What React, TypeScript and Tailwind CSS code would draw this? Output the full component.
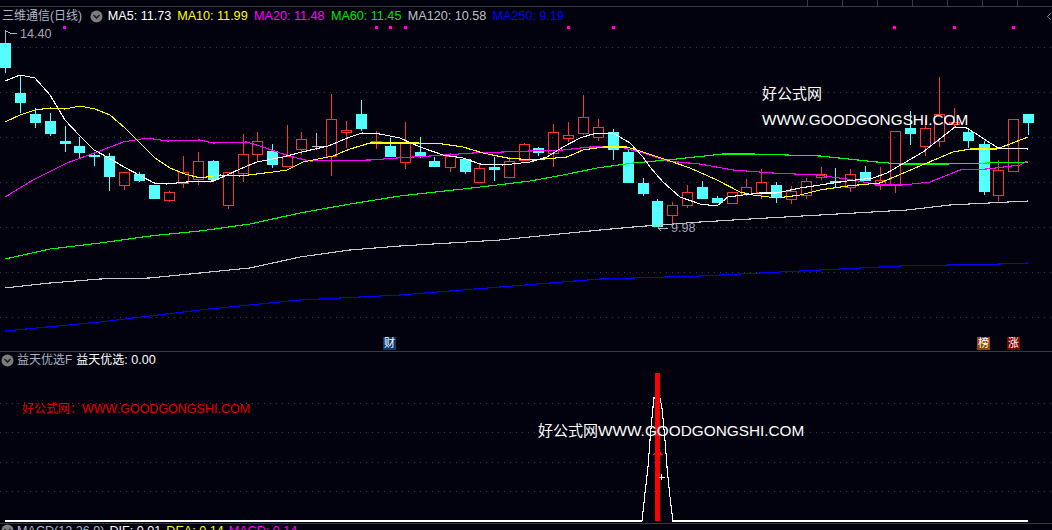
const FONT = "font-['Liberation_Sans','Noto_Sans_CJK_SC',sans-serif]";

// [x, bodyTop, bodyBottom, wickTop, wickBottom, kind]
type Candle = [number, number, number, number, number, "c" | "r" | "g"];

const candles: Candle[] = [
  [5, 43, 68, 32, 73, "c"],
  [20.5, 93, 103, 75, 113, "c"],
  [35.5, 114, 123, 108, 128, "c"],
  [50.5, 121, 134, 113, 136, "c"],
  [65, 141, 144, 126, 152, "c"],
  [79.5, 146, 153, 137, 159, "c"],
  [94.5, 155, 157, 153, 166, "c"],
  [109.5, 156, 177, 153, 191, "c"],
  [124.5, 172, 185, 172, 190, "r"],
  [139.5, 174, 181, 172, 182, "c"],
  [154, 185, 199, 185, 199, "c"],
  [169, 192, 200, 191, 202, "r"],
  [183.5, 172, 183, 156, 188, "r"],
  [198.5, 161, 179, 152, 185, "r"],
  [213.5, 161, 180, 160, 182, "c"],
  [228, 172, 205, 172, 209, "r"],
  [243, 154, 173, 134, 182, "r"],
  [257.5, 141, 154, 132, 162, "r"],
  [272.5, 151, 165, 144, 168, "c"],
  [287.5, 156, 166, 125, 167, "r"],
  [301.5, 139, 149, 132, 155, "r"],
  [316, 146, 146, 133, 150, "g"],
  [331, 119, 156, 94, 176, "r"],
  [346.5, 130, 132, 121, 148, "r"],
  [361.5, 114, 129, 100, 131, "c"],
  [376, 141, 143, 131, 149, "r"],
  [390.5, 146, 157, 138, 157, "c"],
  [405.5, 142, 162, 122, 169, "r"],
  [420, 152, 156, 137, 158, "c"],
  [434.5, 161, 167, 157, 167, "c"],
  [450.5, 156, 167, 153, 172, "r"],
  [465, 159, 172, 158, 174, "c"],
  [479.5, 168, 182, 164, 182, "r"],
  [494.5, 167, 170, 157, 181, "c"],
  [509, 161, 177, 157, 177, "r"],
  [524, 144, 160, 143, 161, "r"],
  [538.5, 148, 153, 147, 156, "c"],
  [553.5, 132, 153, 124, 167, "r"],
  [568.5, 135, 138, 122, 142, "r"],
  [583.5, 117, 133, 95, 135, "r"],
  [598.5, 127, 137, 119, 141, "r"],
  [613, 132, 150, 129, 160, "c"],
  [628, 152, 183, 150, 183, "c"],
  [643, 183, 194, 178, 196, "c"],
  [657.5, 201, 227, 199, 227, "c"],
  [672.5, 205, 215, 202, 227, "r"],
  [687.5, 192, 205, 185, 208, "r"],
  [702.5, 187, 199, 181, 199, "c"],
  [717.5, 198, 203, 196, 203, "c"],
  [732, 192, 203, 192, 203, "r"],
  [746.5, 187, 194, 179, 196, "r"],
  [761.5, 182, 192, 169, 199, "r"],
  [776.5, 185, 197, 182, 203, "c"],
  [791.5, 191, 199, 186, 204, "r"],
  [806.5, 181, 195, 178, 199, "r"],
  [821, 174, 177, 167, 180, "r"],
  [835, 181, 183, 168, 187, "c"],
  [850, 174, 187, 169, 192, "r"],
  [865, 172, 181, 166, 181, "c"],
  [880, 180, 185, 167, 190, "r"],
  [895, 131, 185, 131, 193, "r"],
  [910, 128, 134, 111, 145, "c"],
  [925, 128, 146, 119, 156, "r"],
  [939.5, 114, 141, 77, 147, "r"],
  [954.5, 122, 124, 108, 128, "r"],
  [968.5, 132, 141, 130, 148, "c"],
  [984, 144, 192, 141, 195, "c"],
  [998, 170, 195, 160, 201, "r"],
  [1013, 119, 171, 119, 172, "r"],
  [1028, 114, 123, 114, 135, "c"],
];

const ma5 = "5,81 20,75 35,78 50,95 65,120 79,135 94,150 109,158 124,167 139,175 154,183 167,184 187,182 213,181 227,175 240,169 257,162 283,157 302,152 328,146 350,137 362,133 380,134 400,138 420,147 443,155 463,158 480,164 503,165 530,162 547,157 563,147 580,138 593,134 613,133 630,143 643,157 650,167 663,182 680,197 700,204 717,206 728,197 743,195 760,193 777,193 800,188 820,185 847,181 873,178 887,173 923,152 955,127 967,128 998,148 1028,149";
const ma10 = "5,122 20,115 35,110 50,108 65,109 80,106 95,109 110,115 125,128 140,143 155,158 170,168 185,174 200,178 220,175 240,176 273,172 287,170 303,162 333,156 350,149 370,143 417,143 443,144 463,147 483,153 507,158 533,160 567,157 583,150 603,147 627,147 643,152 667,160 690,168 717,180 740,192 753,195 777,198 800,195 820,190 847,186 880,183 927,163 953,152 970,149 997,149 1028,137";
const ma20 = "5,197 33,180 67,163 100,151 123,142 147,138 167,141 200,140 213,143 247,142 263,147 280,153 297,158 310,161 370,160 397,158 430,156 473,153 503,152 530,151 563,150 590,147 620,147 643,153 667,161 700,164 733,170 773,173 817,175 847,179 880,185 903,185 930,182 960,170 987,169 1020,165 1028,161";
const ma60 = "5,259 50,249 100,243 150,236 200,231 250,224 300,213 350,204 400,196 463,189 497,185 530,181 563,175 597,168 633,163 667,160 723,154 753,154 820,156 877,162 900,164 947,164 1028,162";
const ma120 = "5,288 50,283 100,279 150,278 200,273 250,268 300,257 350,250 400,246 500,240 600,230 633,227 700,222 767,218 820,215 907,210 950,205 1028,201";
const ma250 = "5,331 100,322 200,310 300,300 400,295 500,287 600,279 700,276 800,271 900,266 1000,264 1028,263";

const signalDots = [63, 375, 389, 404, 567, 612, 893, 953, 1012];
const mainGrid = [47, 92, 137, 182, 227, 272, 317];
const subGrid = [403, 432, 462, 491];
const topCells = ["10.72", "11.98", "5.63", "2.14", "0.96", "", "1.08"];

function CandleMark({ c }: { c: Candle }) {
  const [x, top, bottom, wickTop, wickBottom, kind] = c;
  const cx = Math.floor(x) + 0.5;
  if (kind === "c") {
    return (
      <g>
        <line x1={cx} x2={cx} y1={wickTop} y2={wickBottom} stroke="#54ffff" />
        <rect x={cx - 5.5} y={top} width={11} height={Math.max(bottom - top, 2)} fill="#54ffff" />
      </g>
    );
  }
  if (kind === "g") {
    return (
      <g stroke="#c0c0c0">
        <line x1={cx} x2={cx} y1={wickTop} y2={wickBottom} />
        <line x1={cx - 5} x2={cx + 6} y1={top + 0.5} y2={top + 0.5} />
      </g>
    );
  }
  return (
    <g stroke="#ff3232" fill="none">
      <line x1={cx} x2={cx} y1={wickTop} y2={top} />
      <line x1={cx} x2={cx} y1={bottom} y2={wickBottom} />
      <rect x={cx - 5} y={top + 0.5} width={10} height={bottom - top} />
    </g>
  );
}

function Toggle() {
  return (
    <svg width="13" height="13" viewBox="0 0 13 13" className="shrink-0">
      <circle cx="6.5" cy="6.5" r="6" fill="#7c7c7c" />
      <path d="M3.5 5 L6.5 8 L9.5 5" fill="none" stroke="#20202a" strokeWidth="1.6" />
    </svg>
  );
}

function Badge({ text, className }: { text: string; className: string }) {
  return (
    <div className={`absolute top-[330px] flex h-[13px] w-[13px] items-center justify-center text-[11px] leading-none text-white ${className}`}>
      {text}
    </div>
  );
}

function MainChart() {
  return (
    <svg width="1052" height="344" viewBox="0 7 1052 344" className="absolute inset-0" shapeRendering="crispEdges">
      {mainGrid.map((y) => (
        <line key={y} x1="0" x2="1052" y1={y + 0.5} y2={y + 0.5} stroke="#3c3c3c" strokeDasharray="1 5" />
      ))}
      {signalDots.map((x) => (
        <rect key={x} x={x} y="26" width="3" height="3" fill="#ff00ff" />
      ))}
      {candles.map((c) => (
        <CandleMark key={c[0]} c={c} />
      ))}
      <polyline points={ma250} fill="none" stroke="#0000ff" strokeWidth="1.1" />
      <polyline points={ma120} fill="none" stroke="#c8c8c8" strokeWidth="1.1" />
      <polyline points={ma60} fill="none" stroke="#00ff00" strokeWidth="1.1" />
      <polyline points={ma20} fill="none" stroke="#ff00ff" strokeWidth="1.1" />
      <polyline points={ma10} fill="none" stroke="#ffff00" strokeWidth="1.1" />
      <polyline points={ma5} fill="none" stroke="#ffffff" strokeWidth="1.1" />
      <path d="M5.5 30 V43 M5.5 31 L10 33 L17 33" fill="none" stroke="#b0b0c0" />
      <path d="M658 228 H668 M658 228 L661 225 M658 228 L661 231" fill="none" stroke="#b0b0c0" />
      <path d="M1051 13 L1047.5 16.5 L1051 20" fill="none" stroke="#777" />
    </svg>
  );
}

function SubChart() {
  return (
    <svg width="1052" height="172" viewBox="0 352 1052 172" className="absolute inset-0" shapeRendering="crispEdges">
      {subGrid.map((y) => (
        <line key={y} x1="0" x2="1052" y1={y + 0.5} y2={y + 0.5} stroke="#3c3c3c" strokeDasharray="1 5" />
      ))}
      <polyline
        points="5,521 642,521 645,493 648,467 650,440 653,407 654,398 660,398 662,408 665,440 667,467 670,497 673,521 1028,521"
        fill="none"
        stroke="#ffffff"
        strokeWidth="1.1"
      />
      <rect x="655" y="373" width="5" height="148" fill="#ff0000" />
      <path d="M653 455 L658 449 L663 455 Z" fill="#ff0000" />
      <path d="M661.5 474 V480 M658.5 477.5 H664.5" fill="none" stroke="#ffffff" />
    </svg>
  );
}

export default function App() {
  return (
    <div className={`flex h-[530px] w-[1052px] flex-col overflow-hidden bg-[#02020e] ${FONT}`}>
      <div className="flex h-[7px] shrink-0 overflow-hidden border-b border-[#3a3a3a] text-[12.6px] leading-[15px] text-[#c0d0e0] whitespace-nowrap">
        <div className="mt-[-11px] flex w-[817px] gap-[22px] pl-[27px]">
          <span>12.87</span>
          <span>12.43</span>
          <span>11.98</span>
          <span>11.73</span>
          <span className="text-[#e0c000]">5.63%</span>
          <span>23.18</span>
          <span>7.45</span>
          <span>3.22</span>
        </div>
        {topCells.map((t, i) => (
          <div key={i} className="h-[15px] w-[35px] shrink-0 border-l border-[#3a3a3a] pl-[6px]">
            <div className="mt-[-11px]">{t}</div>
          </div>
        ))}
      </div>

      <div className="relative h-[345px] shrink-0 border-b border-[#3a3a3a]">
        <MainChart />
        <div className="relative flex h-[18px] items-center gap-[6.4px] whitespace-nowrap pl-[2px] text-[12.6px]">
          <span className="mr-[2px] text-[12px] text-[#b4b4c4]">三维通信(日线)</span>
          <Toggle />
          <span className="ml-[-2px] mr-[-0.5px] text-white">MA5: 11.73</span>
          <span className="text-[#ffff00]">MA10: 11.99</span>
          <span className="text-[#ff00ff]">MA20: 11.48</span>
          <span className="text-[#00e600]">MA60: 11.45</span>
          <span className="text-[#c0c0c0]">MA120: 10.58</span>
          <span className="text-[#0000ff]">MA250: 9.19</span>
        </div>
        <span className="absolute left-[20px] top-[20px] text-[12.6px] leading-[15px] text-[#a4a4b4]">14.40</span>
        <span className="absolute left-[671px] top-[214px] text-[12.6px] leading-[15px] text-[#a4a4b4]">9.98</span>
        <div className="absolute left-[762px] top-[78px] text-[15px] leading-[18px] text-white">好公式网</div>
        <div className="absolute left-[762px] top-[104px] text-[15.35px] leading-[18px] text-white">WWW.GOODGONGSHI.COM</div>
        <Badge text="财" className="left-[383px] bg-[#0a3a70]" />
        <Badge text="榜" className="left-[977px] bg-[#8a4a00]" />
        <Badge text="涨" className="left-[1007px] bg-[#7a0000]" />
      </div>

      <div className="relative h-[172px] shrink-0 border-b border-[#3a3a3a]">
        <SubChart />
        <div className="relative flex h-[16px] items-center gap-[4px] whitespace-nowrap pl-[1px] text-[12.6px]">
          <Toggle />
          <span className="ml-[-1px] text-[12px] text-[#a8b4c4]">益天优选F</span>
          <span className="text-white"><span className="text-[12px]">益天优选:</span> 0.00</span>
        </div>
        <div className="absolute left-[22px] top-[47px] whitespace-nowrap leading-[18px] text-[#e60000]">
          <span className="text-[12px]">好公式网：</span>
          <span className="text-[12.5px]">WWW.GOODGONGSHI.COM</span>
        </div>
        <div className="absolute left-[538px] top-[70px] whitespace-nowrap leading-[18px] text-white">
          <span className="text-[15px]">好公式网</span>
          <span className="text-[15.35px]">WWW.GOODGONGSHI.COM</span>
        </div>
      </div>

      <div className="flex flex-1 items-start gap-[5px] overflow-hidden pl-[1px] text-[12.6px] leading-[15px] whitespace-nowrap">
        <Toggle />
        <span className="ml-[-2px] text-[#a8b4c4]">MACD(12.26.9)</span>
        <span className="text-white">DIF: 0.01</span>
        <span className="text-[#ffff00]">DEA: 0.14</span>
        <span className="text-[#ff00ff]">MACD: 0.14</span>
      </div>
    </div>
  );
}
